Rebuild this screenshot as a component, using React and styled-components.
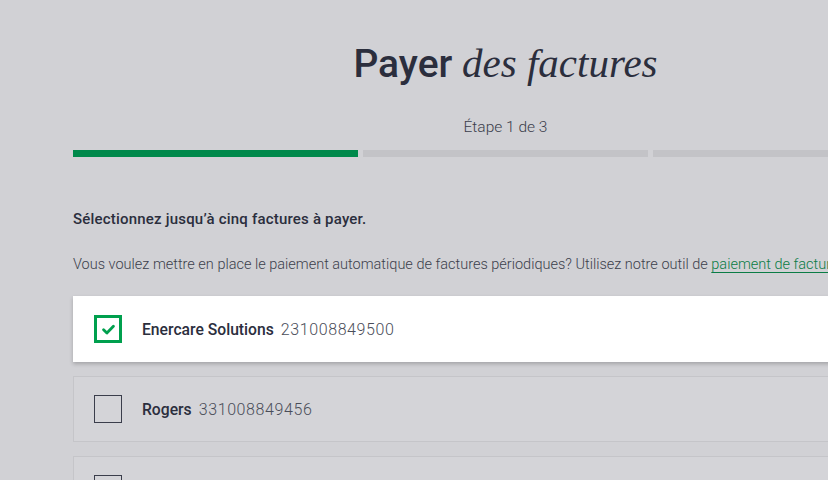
import React from 'react'
import styled, { createGlobalStyle } from 'styled-components'

const GlobalStyle = createGlobalStyle`
    html, body {
        margin: 0;
        padding: 0;
        background: #d1d1d5;
        overflow: hidden;
    }
    body {
        font-family: Roboto, "Liberation Sans", sans-serif;
        color: #2b2e3d;
    }
`

const Page = styled.div`
    width: 865px;
    margin-left: 73px;
    padding-top: 33px;
`

const Title = styled.h1`
    margin: 0;
    text-align: center;
    font-size: 39px;
    font-weight: 500;
    line-height: 60px;
    color: #2b2e3d;
`

const Serif = styled.em`
    font-family: "Liberation Serif", "DejaVu Serif", serif;
    font-style: italic;
    font-weight: 400;
    font-size: 41px;
`

const Step = styled.div`
    text-align: center;
    font-size: 15.5px;
    font-weight: 300;
    color: #3a3d4b;
    margin-top: 24px;
`

const Progress = styled.div`
    display: grid;
    grid-template-columns: repeat(3, 1fr);
    gap: 5px;
    margin-top: 14px;
`

const Segment = styled.div`
    height: 7px;
    background: ${p => (p.done ? '#00894b' : '#c3c3c7')};
`

const Lead = styled.p`
    margin: 53px 0 0;
    font-size: 15px;
    font-weight: 500;
    letter-spacing: 0.2px;
    color: #2b2e3d;
`

const Info = styled.p`
    margin: 28px 0 0;
    font-size: 14.5px;
    font-weight: 300;
    color: #3c3f4c;
    white-space: nowrap;
`

const GreenLink = styled.a`
    color: #0a7c45;
    text-decoration: underline;
    text-underline-offset: 3px;
`

const BillList = styled.ul`
    list-style: none;
    padding: 0;
    margin: 23px 0 0;
    display: flex;
    flex-direction: column;
    gap: 14px;
`

const Bill = styled.li`
    box-sizing: border-box;
    height: 66px;
    display: flex;
    align-items: center;
    padding-left: 20px;
    background: ${p => (p.checked ? '#ffffff' : '#d4d4d8')};
    border: 1px solid ${p => (p.checked ? '#ffffff' : '#c5c5c9')};
    box-shadow: ${p => (p.checked ? '0 2px 4px rgba(0,0,0,0.22)' : 'none')};
`

const Box = styled.span`
    box-sizing: border-box;
    width: 28px;
    height: 28px;
    display: flex;
    align-items: center;
    justify-content: center;
    border: ${p => (p.checked ? '3px solid #00a04e' : '1px solid #3a3d4b')};
`

const Name = styled.span`
    margin-left: 20px;
    font-size: 15.7px;
    font-weight: 500;
    color: #2b2e3d;
`

const Number = styled.span`
    margin-left: 7px;
    font-size: 16px;
    font-weight: 300;
    color: #4a4d59;
    letter-spacing: 0.6px;
`

const Check = () => (
    <svg width="13" height="11" viewBox="0 0 13 11">
        <path d="M1.6 5.8 L4.9 9 L11.4 2.2" fill="none" stroke="#00a04e" strokeWidth="2.8" strokeLinecap="round" strokeLinejoin="round" />
    </svg>
)

const bills = [
    { name: 'Enercare Solutions', number: '231008849500', checked: true },
    { name: 'Rogers', number: '331008849456', checked: false },
    { name: 'Bell Canada', number: '431008849112', checked: false }
]

export default function App() {
    return (
        <>
            <GlobalStyle />
            <Page>
                <Title>Payer <Serif>des factures</Serif></Title>
                <Step>Étape 1 de 3</Step>
                <Progress>
                    <Segment done />
                    <Segment />
                    <Segment />
                </Progress>
                <Lead>Sélectionnez jusqu’à cinq factures à payer.</Lead>
                <Info>
                    Vous voulez mettre en place le paiement automatique de factures périodiques? Utilisez notre outil de{' '}
                    <GreenLink href="#">paiement de factures automatique</GreenLink>.
                </Info>
                <BillList>
                    {bills.map(b => (
                        <Bill key={b.number} checked={b.checked}>
                            <Box checked={b.checked}>{b.checked && <Check />}</Box>
                            <Name>{b.name}</Name>
                            <Number>{b.number}</Number>
                        </Bill>
                    ))}
                </BillList>
            </Page>
        </>
    )
}
